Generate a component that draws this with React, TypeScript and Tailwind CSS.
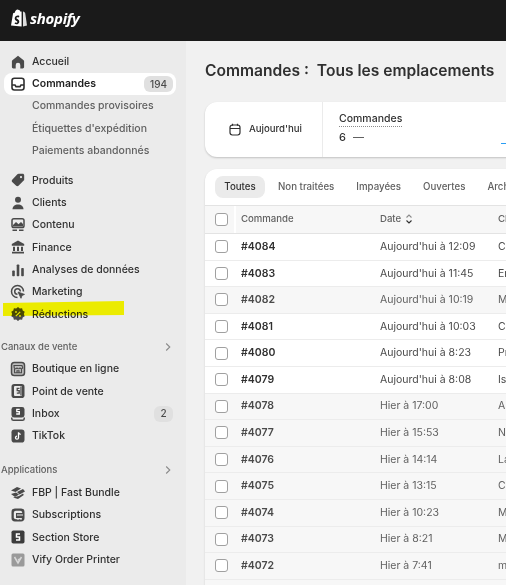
import React from "react";

const c = "#4a4a4a";

const Icon = ({ children }: { children: React.ReactNode }) => (
  <svg width="16" height="16" viewBox="0 0 16 16" className="shrink-0">{children}</svg>
);

const icons: Record<string, React.ReactNode> = {
  home: <path fill={c} d="M8 1.800 2.400 6.200c-.3.3-.5.6-.5 1V13c0 .8.600 1.400 1.400 1.400h2.400V11a2.300 2.300 0 0 1 4.600 0v3.400h2.400c.8 0 1.400-.6 1.400-1.400V7.200c0-.4-.2-.7-.5-1z" />,
  orders: <g fill="none" stroke="#303030" strokeWidth="1.600"><rect x="2" y="2.200" width="12" height="11.800" rx="2.400" /><path d="M2 9h3l1 1.600h4L11 9h3" /></g>,
  tag: <path fill={c} d="M8.600 1.800h4c.9 0 1.600.7 1.600 1.600v4c0 .5-.2.9-.5 1.200l-5.200 5.200c-.6.6-1.700.6-2.300 0L2.200 10c-.6-.6-.6-1.700 0-2.300l5.200-5.400c.3-.3.7-.5 1.200-.5zM11 4a1.100 1.100 0 1 0 0 2.200A1.100 1.100 0 0 0 11 4z" />,
  person: <g fill={c}><circle cx="8" cy="4.800" r="3" /><path d="M2.500 14.200c0-3 2.400-4.700 5.500-4.700s5.500 1.700 5.500 4.700z" /></g>,
  content: <g><rect x="2" y="1.800" width="12" height="8.700" rx="1.800" fill="none" stroke={c} strokeWidth="1.500" /><path fill={c} d="m3 8 3-3 2.500 2.200L11 5l2 2v2.500H3z" /><path stroke={c} strokeWidth="1.500" d="M2.500 13.300h4.500M9 13.300h4.500" /></g>,
  bank: <g fill={c}><path d="M8 1.500 1.800 5v1.800h12.400V5z" /><path d="M3 7.700h2V12H3zM7 7.700h2V12H7zM11 7.700h2V12h-2zM2 12.800h12v1.700H2z" /></g>,
  chart: <g fill={c}><rect x="2.200" y="8.500" width="2.600" height="5.700" rx=".8" /><rect x="6.700" y="2.500" width="2.600" height="11.700" rx=".8" /><rect x="11.200" y="6" width="2.600" height="8.200" rx=".8" /></g>,
  marketing: <g fill="none" stroke={c} strokeWidth="1.500"><path d="M7.500 13.500A6 6 0 1 1 13.500 7.500" /><path d="M7.500 10.300a2.800 2.800 0 1 1 2.800-2.800" /><path fill={c} strokeWidth=".8" d="m8 8 6.500 2.400-2.500 1.100L11 14.300z" /></g>,
  discount: <g><path fill={c} d="m8 1 1.800 1.500 2.300-.2.600 2.300 2 1.200-.9 2.200.9 2.200-2 1.200-.6 2.300-2.300-.2L8 15l-1.800-1.500-2.300.2-.6-2.300-2-1.200.9-2.200-.9-2.200 2-1.200.6-2.300 2.300.2z" /><path stroke="#e8e800" strokeWidth="1.200" d="m5.800 10.200 4.400-4.400" /><circle cx="6" cy="6" r=".9" fill="#e8e800" /><circle cx="10" cy="10" r=".9" fill="#e8e800" /></g>,
  store: <g fill="none" stroke={c} strokeWidth="1.500"><rect x="1.500" y="1.500" width="13" height="13" rx="2.800" fill="#bdbdbd" /><path d="M4 4.500h8l.7 2.500c-.6 1-2 1-2.700 0-.7 1-2.300 1-3 0-.7 1-2.100 1-2.700 0zM4.500 8v3.800h7V8M7 12V9.700h2V12" strokeWidth="1.100" /></g>,
  pos: <g><rect x="1.500" y="1" width="13" height="14" rx="2.800" fill={c} /><rect x="4" y="3" width="8" height="10" rx="1" fill="#ebebeb" /><path stroke={c} strokeWidth="1.300" fill="none" d="M9.500 5.300H7.200v2.400h2v2.500H6.800M11 3.500v9" /></g>,
  inbox: <g><rect x="1.500" y="1" width="13" height="10.500" rx="2.400" fill={c} /><path stroke="#fff" strokeWidth="1.300" fill="none" d="M9.700 3.400H6.800v2.300h2.500V8H6.200" /><path stroke={c} strokeWidth="1.500" fill="none" d="M1.800 11.500v1.200c0 1 .8 1.600 1.700 1.600h9c.9 0 1.700-.6 1.700-1.600v-1.200" /></g>,
  tiktok: <g><rect x="1.500" y="1.500" width="13" height="13" rx="2.800" fill={c} /><path stroke="#fff" strokeWidth="1.300" fill="none" d="M8.500 4.300v5.400a1.500 1.500 0 1 1-1.500-1.500M8.500 4.300c.2 1.200 1 1.900 2.200 2" /></g>,
  fbp: <g fill={c}><path d="M1 5.500 7 2l4 1.500L5.500 7z" /><path d="M7 7l6-3 2 2.500-5.500 3z" /><path d="M1 9l5-1.500 3 2-4 2.500z" /><path d="M3 12.500l6-1.500 4-2.500.8 1.500-5.800 4z" /></g>,
  subs: <g><rect x="1.500" y="1.500" width="13" height="13" rx="3.400" fill={c} /><rect x="3.800" y="3.800" width="8.400" height="8.400" rx="2" fill="#ebebeb" /><path fill={c} d="M6 6h7v5H6z" /><path stroke="#ebebeb" strokeWidth="1" d="M7 8h6M8 11v2M11 11v2" /></g>,
  section: <g><rect x="1.500" y="1.500" width="13" height="13" rx="1.800" fill="#3c3c3c" /><path stroke="#fff" strokeWidth="1.500" fill="none" d="M10 5H6.500v3h3v3H6" /></g>,
  vify: <g><rect x="1.500" y="1.500" width="13" height="13" rx="1.500" fill="#9a9a9a" /><path stroke="#d8d8d8" strokeWidth="1.500" fill="none" d="m4.500 5 3.500 6 3.500-6M8 8l2-1" /></g>,
};

type Item = { label: string; icon?: string; badge?: string; active?: boolean; sub?: boolean };

const NavRow = ({ label, icon, badge, active, sub }: Item) => (
  <div
    className={`flex h-[22.35px] items-center rounded-lg pl-[6px] pr-[3px] text-[10.5px] ${
      active ? "bg-white font-semibold text-[#1f1f1f]" : sub ? "font-medium text-[#616161]" : "font-medium text-[#303030]"
    }`}
  >
    <span className="flex w-[22px] shrink-0 items-center">{icon && <Icon>{icons[icon]}</Icon>}</span>
    <span className="flex-1 truncate">{label}</span>
    {badge && (
      <span className="flex h-[16px] min-w-[19px] items-center justify-center rounded-md bg-[#e0e0e0] px-[6px] text-[10px] font-medium text-[#4a4a4a]">
        {badge}
      </span>
    )}
  </div>
);

const SectionHead = ({ label }: { label: string }) => (
  <div className="flex h-[22.3px] items-center pr-[3px] text-[9.5px] font-medium text-[#616161]">
    <span className="flex-1">{label}</span>
    <svg width="10" height="10" viewBox="0 0 10 10" fill="none" stroke="#8a8a8a" strokeWidth="1.100">
      <path d="m3.200 1.500 3.600 3.500-3.600 3.500" />
    </svg>
  </div>
);

const rows: [string, string, string, boolean][] = [
  ["#4084", "Aujourd'hui à 12:09", "C", true],
  ["#4083", "Aujourd'hui à 11:45", "Er", true],
  ["#4082", "Aujourd'hui à 10:19", "M", false],
  ["#4081", "Aujourd'hui à 10:03", "C", true],
  ["#4080", "Aujourd'hui à 8:23", "Pr", true],
  ["#4079", "Aujourd'hui à 8:08", "Is", true],
  ["#4078", "Hier à 17:00", "A", false],
  ["#4077", "Hier à 15:53", "N", false],
  ["#4076", "Hier à 14:14", "La", false],
  ["#4075", "Hier à 13:15", "Ca", false],
  ["#4074", "Hier à 10:23", "M", false],
  ["#4073", "Hier à 8:21", "M", false],
  ["#4072", "Hier à 7:41", "m", false],
];

const Checkbox = () => (
  <span className="block h-[13px] w-[13px] rounded-[3px] border border-[#a0a0a0] bg-white" />
);

export default function App() {
  return (
    <div className="flex h-[585px] w-[506px] flex-col overflow-hidden bg-[#f1f1f1] font-['Inter',_sans-serif]">
      <header className="flex h-[41px] shrink-0 items-center gap-[3px] bg-[#1a1a1a] pb-[4px] pl-[10px]">
        <svg width="17" height="19" viewBox="0 0 17 19">
          <path fill="#fff" d="M1 16.500 3 4.700c.1-.6 1-.8 1.700-1 .4-1.600 1.500-3.200 3-3.200.5 0 .8.200 1 .500 1-.1 1.600.9 1.900 1.800l1-.3V17.500z" />
          <path fill="#dcdcdc" d="m13 2.600.9.100 1.300 1.400L17 16.400l-4 1z" />
          <path fill="#1a1a1a" d="M9.400 6.900 8.900 8.500c-1.400-.6-2.500-.2-2.500.6 0 1 2.900 1.400 2.900 3.600 0 2.100-2.600 3.300-4.700 2.100l.5-1.600c1.100.8 2.300.6 2.300-.3 0-1.200-2.700-1.300-2.700-3.500 0-2.400 2.800-3.600 4.700-2.500z" />
        </svg>
        <span className="font-['Open_Sans',_sans-serif] text-[15px] font-bold italic tracking-[-0.3px] text-white">shopify</span>
      </header>
      <div className="flex min-h-0 flex-1">
        <aside className="relative flex w-[186px] shrink-0 flex-col bg-[#ebebeb] pl-[4px] pr-[10px] pt-[9.5px]">
          <NavRow label="Accueil" icon="home" />
          <NavRow label="Commandes" icon="orders" badge="194" active />
          <NavRow label="Commandes provisoires" sub />
          <NavRow label="Étiquettes d'expédition" sub />
          <NavRow label="Paiements abandonnés" sub />
          <div className="h-[7px] shrink-0" />
          <NavRow label="Produits" icon="tag" />
          <NavRow label="Clients" icon="person" />
          <NavRow label="Contenu" icon="content" />
          <NavRow label="Finance" icon="bank" />
          <NavRow label="Analyses de données" icon="chart" />
          <NavRow label="Marketing" icon="marketing" />
          <NavRow label="Réductions" icon="discount" />
          <div className="-ml-[3px] mt-[10px]"><SectionHead label="Canaux de vente" /></div>
          <NavRow label="Boutique en ligne" icon="store" />
          <NavRow label="Point de vente" icon="pos" />
          <NavRow label="Inbox" icon="inbox" badge="2" />
          <NavRow label="TikTok" icon="tiktok" />
          <div className="-ml-[3px] mt-[12px]"><SectionHead label="Applications" /></div>
          <NavRow label="FBP | Fast Bundle" icon="fbp" />
          <NavRow label="Subscriptions" icon="subs" />
          <NavRow label="Section Store" icon="section" />
          <NavRow label="Vify Order Printer" icon="vify" />
          <svg className="pointer-events-none absolute left-0 top-[258px] mix-blend-multiply" width="130" height="20" viewBox="0 0 130 20">
            <path fill="#ffff00" d="M3 4 124 2v14L3 17z" />
          </svg>
        </aside>
        <main className="min-w-0 flex-1 overflow-hidden pl-[19px]">
          <h1 className="mt-[20px] h-[20px] whitespace-nowrap text-[15.6px] font-semibold leading-[20px] text-[#303030]">
            Commandes :&nbsp; Tous les emplacements
          </h1>
          <section className="mt-[21px] flex h-[55px] w-[400px] rounded-xl bg-white shadow-[0_1px_2px_rgba(0,0,0,0.2)]">
            <div className="flex w-[118px] shrink-0 items-center gap-[8px] border-r border-[#ebebeb] pl-[24px] text-[9.6px] font-medium text-[#303030]">
              <svg width="12" height="13" viewBox="0 0 12 13" fill="none" stroke="#303030" strokeWidth="1.200">
                <rect x="1" y="2" width="10" height="10" rx="2.400" />
                <path d="M1 5.500h10M3.500 .8v2M8.500 .8v2" />
              </svg>
              Aujourd'hui
            </div>
            <div className="relative flex-1 pl-[16px] pt-[9px] text-[#303030]">
              <div className="w-fit border-b border-dotted border-[#8a8a8a] text-[10.5px] font-medium leading-[15px]">Commandes</div>
              <div className="mt-[3px] flex items-center gap-[7px] text-[11px] font-medium leading-[15px]">
                6 <span className="text-[#616161]">—</span>
              </div>
              <span className="absolute left-[178px] top-[41px] h-[1px] w-[6px] bg-[#2a9df4]" />
            </div>
          </section>
          <section className="mt-[12px] w-[400px] rounded-t-xl bg-white shadow-[0_1px_2px_rgba(0,0,0,0.15)]">
            <div className="flex h-[36px] items-center overflow-hidden pl-[10px] text-[9.7px] font-medium text-[#616161]">
              <span className="flex h-[22px] w-[50px] shrink-0 items-center justify-center rounded-lg bg-[#ebebeb] text-[#303030]">Toutes</span>
              <span className="ml-[13px] shrink-0">Non traitées</span>
              <span className="ml-[22px] shrink-0">Impayées</span>
              <span className="ml-[22px] shrink-0">Ouvertes</span>
              <span className="ml-[22px] shrink-0">Archivées</span>
            </div>
            <div className="flex h-[29px] items-center border-y border-[#e3e3e3] bg-[#f7f7f7] text-[9.6px] font-medium text-[#616161]">
              <span className="flex h-full w-[31px] shrink-0 items-center border-r-2 border-white pl-[10px]"><Checkbox /></span>
              <span className="w-[144px] shrink-0 pl-[5px]">Commande</span>
              <span className="flex w-[118px] shrink-0 items-center gap-[3px]">
                Date
                <svg width="10" height="12" viewBox="0 0 10 12" fill="none" stroke="#303030" strokeWidth="1.100">
                  <path stroke="#8a8a8a" d="m2.500 4.500 2.500-2.500 2.500 2.500" />
                  <path d="m2.500 7.500 2.500 2.500 2.500-2.500" />
                </svg>
              </span>
              <span>Client</span>
            </div>
            {rows.map(([id, date, client, fresh]) => (
              <div
                key={id}
                className={`flex h-[26.6px] items-center border-b border-[#ececec] text-[10.5px] ${
                  fresh ? "bg-white text-[#4a4a4a]" : "bg-[#f7f7f7] text-[#616161]"
                }`}
              >
                <span className="flex w-[36px] shrink-0 justify-start pl-[10px]"><Checkbox /></span>
                <span className={`w-[139px] shrink-0 font-semibold ${fresh ? "text-[#303030]" : "text-[#4a4a4a]"}`}>{id}</span>
                <span className="w-[118px] shrink-0">{date}</span>
                <span>{client}</span>
              </div>
            ))}
            <div className="h-[20px] bg-[#f7f7f7]" />
          </section>
        </main>
      </div>
    </div>
  );
}
